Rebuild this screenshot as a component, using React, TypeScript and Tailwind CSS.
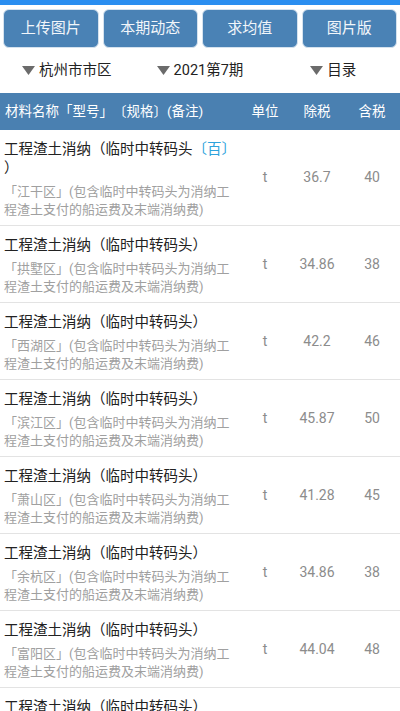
import React from "react";

const rows = [
  { area: "江干区", pre: "36.7", tax: "40", tag: true },
  { area: "拱墅区", pre: "34.86", tax: "38" },
  { area: "西湖区", pre: "42.2", tax: "46" },
  { area: "滨江区", pre: "45.87", tax: "50" },
  { area: "萧山区", pre: "41.28", tax: "45" },
  { area: "余杭区", pre: "34.86", tax: "38" },
  { area: "富阳区", pre: "44.04", tax: "48" },
  { area: "临安区", pre: "40.37", tax: "44" },
];

const buttons = ["上传图片", "本期动态", "求均值", "图片版"];
const filters = ["杭州市市区", "2021第7期", "目录"];

function Caret() {
  return (
    <svg width="13" height="9" viewBox="0 0 13 9" className="mr-[4px] shrink-0">
      <polygon points="0,0 13,0 6.5,9" fill="#6b6b6b" />
    </svg>
  );
}

export default function App() {
  return (
    <div
      className="h-[711px] w-[400px] overflow-hidden bg-white [text-spacing-trim:space-all] [font-feature-settings:'chws'_0]"
      style={{ fontFamily: '"Roboto", "Noto Sans CJK SC", sans-serif' }}
    >
      {/* status strip */}
      <div className="h-[5px] bg-[#2a8ef0]" />

      {/* action buttons */}
      <div className="grid grid-cols-4 gap-[4px] px-[3px] pt-[4px]">
        {buttons.map((b) => (
          <button
            key={b}
            type="button"
            className="h-[39px] rounded-[6px] border border-[#d5e2ee] bg-[#4a82b5] text-[15px] text-[#f2f6fa]"
          >
            {b}
          </button>
        ))}
      </div>

      {/* filters */}
      <div className="grid h-[45px] grid-cols-3">
        {filters.map((f) => (
          <div key={f} className="flex items-center justify-center text-[14.5px] text-[#222]">
            <Caret />
            {f}
          </div>
        ))}
      </div>

      {/* table header */}
      <div className="flex h-[37px] items-center bg-[#4a80b1] text-[13.5px] text-white">
        <div className="w-[240px] pl-[5px]">材料名称「型号」〔规格〕(备注)</div>
        <div className="w-[50px] text-center">单位</div>
        <div className="w-[54px] text-center">除税</div>
        <div className="flex-1 text-center">含税</div>
      </div>

      {/* rows */}
      {rows.map((r) => (
        <div key={r.area} className="flex items-center border-b border-[#e3e3e3]">
          <div className="w-[240px] pb-[6px] pl-[4px] pr-[4px] pt-[10px]">
            <div className="text-[14.5px] leading-[19px] text-[#222] [line-break:anywhere]">
              工程渣土消纳（临时中转码头
              {r.tag && <span className="text-[#2ea3dc]">〔百〕</span>}）
            </div>
            <div className="mt-[5px] text-[13px] leading-[18px] text-[#a0a0a0]">
              「{r.area}」(包含临时中转码头为消纳工程渣土支付的船运费及末端消纳费)
            </div>
          </div>
          <div className="w-[50px] text-center text-[14px] text-[#8c8c8c]">t</div>
          <div className="w-[54px] text-center text-[14px] text-[#8c8c8c]">{r.pre}</div>
          <div className="flex-1 text-center text-[14px] text-[#8c8c8c]">{r.tax}</div>
        </div>
      ))}
    </div>
  );
}
